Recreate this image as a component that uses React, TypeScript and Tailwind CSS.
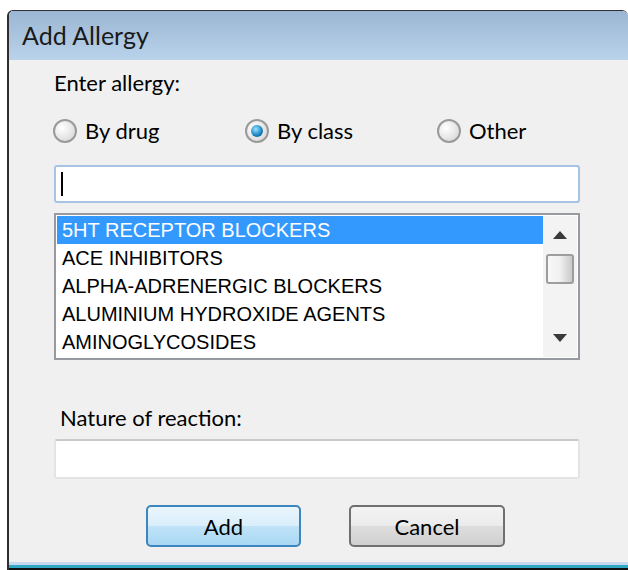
import { useState } from 'react';

// Win7-style "Add Allergy" dialog
const allergyClasses = [
  '5HT RECEPTOR BLOCKERS',
  'ACE INHIBITORS',
  'ALPHA-ADRENERGIC BLOCKERS',
  'ALUMINIUM HYDROXIDE AGENTS',
  'AMINOGLYCOSIDES',
];

const modes = ['By drug', 'By class', 'Other'];

function Radio({ label, checked, onClick }: { label: string; checked: boolean; onClick: () => void }) {
  return (
    <button onClick={onClick} className="flex h-[24px] w-[192px] items-center gap-[8px] text-left">
      <span className="flex h-[24px] w-[24px] items-center justify-center rounded-full border-2 border-[#9a9a9a] bg-[radial-gradient(circle_at_35%_35%,#ffffff,#e4e4e4_60%,#cfcfcf)]">
        {checked && (
          <span className="h-[12px] w-[12px] rounded-full bg-[radial-gradient(circle_at_40%_35%,#9be3ff,#1d87c4_55%,#0b4f7c)]" />
        )}
      </span>
      <span className="text-[22px] leading-[24px] text-black">{label}</span>
    </button>
  );
}

function ScrollBar() {
  return (
    <div className="flex w-[34px] flex-col items-center bg-[#f3f3f3]">
      <div className="flex h-[38px] w-full items-center justify-center">
        <svg width="14" height="8" viewBox="0 0 14 8">
          <path d="M7 0 L14 8 L0 8 Z" fill="#3a3a3a" />
        </svg>
      </div>
      <div className="h-[30px] w-[28px] rounded-[3px] border-2 border-[#9d9d9d] bg-[linear-gradient(to_right,#f8f8f8,#f0f0f0_50%,#c9c9c9)]" />
      <div className="flex-1" />
      <div className="flex h-[38px] w-full items-center justify-center">
        <svg width="14" height="8" viewBox="0 0 14 8">
          <path d="M0 0 L14 0 L7 8 Z" fill="#3a3a3a" />
        </svg>
      </div>
    </div>
  );
}

export default function App() {
  const [mode, setMode] = useState(1);
  const [selected, setSelected] = useState(0);

  return (
    <div className="h-[570px] w-[628px] overflow-hidden bg-white pl-[7px] pt-[10px] font-['Lato',sans-serif]">
      <div className="flex h-[560px] w-[621px] flex-col overflow-hidden rounded-t-[6px] border-l-2 border-t border-[#2e2e2e]">
        <div className="flex h-[49px] items-center bg-[linear-gradient(to_bottom,#9bb6d3,#bad3eb)] pl-[13px]">
          <span className="text-[25px] leading-none text-[#1a1a1a]">Add Allergy</span>
        </div>
        <div className="flex flex-1">
          <div className="w-[3px] bg-[#c6daef]" />
          <div className="flex flex-1 flex-col bg-[#f0f0f0] pl-[45px]">
            <div className="mt-[11px] h-[24px] text-[22px] leading-[24px] text-black">Enter allergy:</div>

            <div className="ml-[-1px] mt-[24px] flex">
              {modes.map((m, i) => (
                <Radio key={m} label={m} checked={mode === i} onClick={() => setMode(i)} />
              ))}
            </div>

            <div className="mt-[22px] flex h-[38px] w-[526px] items-center rounded-[3px] border-2 border-[#a7c4e2] bg-white pl-[5px]">
              <span className="h-[24px] w-[2px] bg-black" />
            </div>

            <div className="mt-[10px] flex h-[147px] w-[526px] border-2 border-[#979aa0] bg-white p-[1px]">
              <div className="flex-1 font-['Liberation_Sans',sans-serif]">
                {allergyClasses.map((c, i) => (
                  <div
                    key={c}
                    onClick={() => setSelected(i)}
                    className={`h-[28px] pl-[5px] text-[20px] leading-[28px] ${
                      selected === i ? 'bg-[#3399ff] text-white' : 'text-black'
                    }`}
                  >
                    {c}
                  </div>
                ))}
              </div>
              <ScrollBar />
            </div>

            <div className="ml-[6px] mt-[46px] h-[24px] text-[22px] leading-[24px] text-black">Nature of reaction:</div>

            <div className="mt-[9px] h-[40px] w-[526px] rounded-[3px] border-2 border-[#e3e4e6] border-t-[#c9cacd] bg-white" />

            <div className="ml-[92px] mt-[26px] flex gap-[48px]">
              <button className="h-[42px] w-[155px] rounded-[5px] border-2 border-[#3d86bd] bg-[linear-gradient(to_bottom,#eaf5fc,#d9eefb_50%,#bfe3f8_51%,#a9d8f4)] text-[22px] text-black">
                Add
              </button>
              <button className="h-[42px] w-[156px] rounded-[5px] border-2 border-[#707070] bg-[linear-gradient(to_bottom,#f3f3f3,#ebebeb_50%,#dddddd_51%,#d0d0d0)] text-[22px] text-black">
                Cancel
              </button>
            </div>
          </div>
          <div className="w-[4px] bg-[#bcd4ec]" />
        </div>
        <div className="h-[3px] bg-[#c6daef]" />
        <div className="h-[3px] bg-[#2ea8c4]" />
        <div className="h-[2px] bg-[#101010]" />
      </div>
    </div>
  );
}
